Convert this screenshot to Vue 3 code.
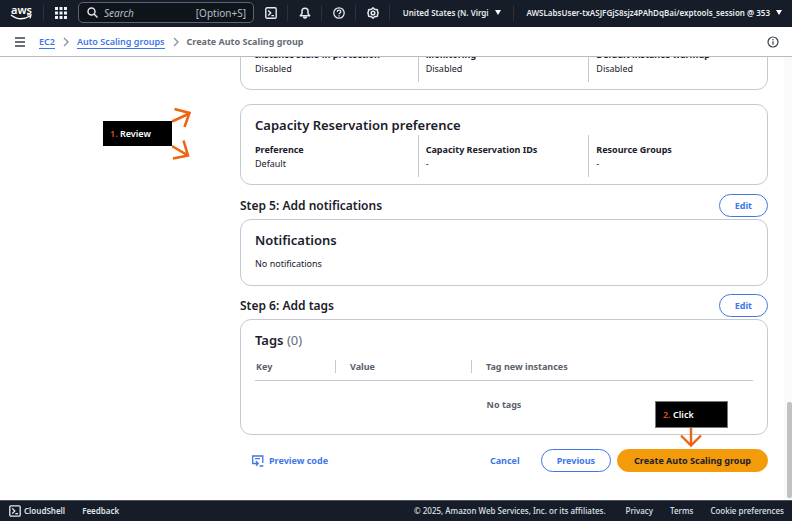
<script setup>
const scaling = [
  { label: 'Instance scale-in protection', value: 'Disabled' },
  { label: 'Monitoring', value: 'Disabled' },
  { label: 'Default instance warmup', value: 'Disabled' },
]
const capacity = [
  { label: 'Preference', value: 'Default' },
  { label: 'Capacity Reservation IDs', value: '-' },
  { label: 'Resource Groups', value: '-' },
]
</script>

<template>
  <div class="page">
    <header class="topbar">
      <a class="logo" href="#" aria-label="AWS home">
        <span class="logo-text">aws</span>
        <svg class="smile" width="22" height="6" viewBox="0 0 22 6" fill="none" stroke="#fff" stroke-width="1.3">
          <path d="M1 1 Q10 8 20 2" />
          <path d="M17 .8 L21 .9 L20 4.4" />
        </svg>
      </a>
      <button class="cell apps" aria-label="Services">
        <svg width="12" height="12" viewBox="0 0 12 12" fill="#f0f2f5">
          <path d="M0 0h3v3H0zM4.5 0h3v3h-3zM9 0h3v3H9zM0 4.5h3v3H0zM4.5 4.5h3v3h-3zM9 4.5h3v3H9zM0 9h3v3H0zM4.5 9h3v3h-3zM9 9h3v3H9z" />
        </svg>
      </button>
      <label class="search">
        <svg width="11" height="11" viewBox="0 0 11 11" fill="none" stroke="#dfe3e8" stroke-width="1.5">
          <circle cx="4.5" cy="4.5" r="3.5" /><path d="M7 7l3.5 3.5" />
        </svg>
        <input type="text" placeholder="Search" aria-label="Search" />
        <span class="hint">[Option+S]</span>
      </label>
      <button class="cell tool" aria-label="CloudShell">
        <svg width="12" height="12" viewBox="0 0 12 12" fill="none" stroke="#e6e9ed" stroke-width="1.4">
          <rect x=".8" y=".8" width="10.4" height="10.4" rx="1.2" /><path d="M3.2 3.4L5.8 6 3.2 8.6M6.4 8.6h2.6" />
        </svg>
      </button>
      <button class="cell tool" aria-label="Notifications">
        <svg width="12" height="12" viewBox="0 0 12 12" fill="none" stroke="#e6e9ed" stroke-width="1.5" stroke-linejoin="round">
          <path d="M1.3 8.7L3 6.6V4.2a3 3 0 0 1 6 0v2.4l1.7 2.1z" /><path d="M4.6 10.2a1.5 1.2 0 0 0 2.8 0z" fill="#e6e9ed" />
        </svg>
      </button>
      <button class="cell tool" aria-label="Help">
        <svg width="12" height="12" viewBox="0 0 12 12" fill="none" stroke="#e6e9ed" stroke-width="1.3">
          <circle cx="6" cy="6" r="5.2" /><path d="M4.2 4.9C4.3 2.6 7.8 2.7 7.8 4.7 7.8 6 6 5.9 6 7.3M6 8.2v1.2" />
        </svg>
      </button>
      <button class="cell tool" aria-label="Settings">
        <svg width="12" height="12" viewBox="0 0 12 12" fill="none" stroke="#e6e9ed" stroke-width="1.5" stroke-linejoin="round">
          <path d="M6 .8l1.5 1.4 2.9.5.2 2L11.2 6l-.6 1.3-.2 2-2.9.5L6 11.2 4.5 9.8l-2.9-.5-.2-2L.8 6l.6-1.3.2-2 2.9-.5z" /><circle cx="6" cy="6" r="1.8" />
        </svg>
      </button>
      <button class="cell region"><span>United States (N. Virgi</span><i class="caret"></i></button>
      <button class="cell account"><span>AWSLabsUser-txASJFGjS8sjz4PAhDqBai/exptools_session @ 353</span><i class="caret"></i></button>
    </header>

    <nav class="crumbs" aria-label="Breadcrumbs">
      <button class="plain menu" aria-label="Open navigation">
        <svg width="10" height="10" viewBox="0 0 10 10" stroke="#39404a" stroke-width="1.3"><path d="M0 1h10M0 5h10M0 9h10" /></svg>
      </button>
      <a href="#">EC2</a>
      <svg class="chev" width="6" height="10" viewBox="0 0 6 10" fill="none" stroke="#8c939d" stroke-width="1.4"><path d="M1 1l4 4-4 4" /></svg>
      <a href="#">Auto Scaling groups</a>
      <svg class="chev" width="6" height="10" viewBox="0 0 6 10" fill="none" stroke="#8c939d" stroke-width="1.4"><path d="M1 1l4 4-4 4" /></svg>
      <span class="current">Create Auto Scaling group</span>
      <button class="plain info" aria-label="Info">
        <svg width="12" height="12" viewBox="0 0 12 12" fill="none" stroke="#39404a" stroke-width="1.2"><circle cx="6" cy="6" r="5" /><path d="M6 5.2v3.6M6 3v1.2" /></svg>
      </button>
    </nav>

    <div class="body">
      <main>
        <section class="card">
          <dl class="cols">
            <div v-for="f in scaling" :key="f.label"><dt>{{ f.label }}</dt><dd>{{ f.value }}</dd></div>
          </dl>
        </section>

        <section class="card capacity">
          <h3>Capacity Reservation preference</h3>
          <dl class="cols">
            <div v-for="f in capacity" :key="f.label"><dt>{{ f.label }}</dt><dd>{{ f.value }}</dd></div>
          </dl>
          <div class="callout review"><b>1.</b> Review</div>
          <svg class="review-arrows" width="20" height="58" viewBox="0 0 20 58" fill="none" stroke="#ee6410" stroke-width="2.6">
            <path d="M0 16.5L17.5 8.5M2.5 4L17.5 8 12.5 22" /><path d="M0 41L16 50.5M11.5 35.5L16 50.5 1 53.5" />
          </svg>
        </section>

        <div class="step"><h2>Step 5: Add notifications</h2><button class="btn">Edit</button></div>
        <section class="card notes">
          <h3>Notifications</h3>
          <p>No notifications</p>
        </section>

        <div class="step"><h2>Step 6: Add tags</h2><button class="btn">Edit</button></div>
        <section class="card tags">
          <h3>Tags <span>(0)</span></h3>
          <table>
            <thead>
              <tr><th class="key">Key</th><th class="val">Value</th><th>Tag new instances</th></tr>
            </thead>
            <tbody><tr><td colspan="3">No tags</td></tr></tbody>
          </table>
        </section>

        <div class="actions">
          <button class="plain link preview">
            <svg width="12" height="12" viewBox="0 0 12 12" fill="none" stroke="#4176e4" stroke-width="1.3">
              <path d="M.7 6V1h10.1v7M3 3.6h5M.7 5v3.5h5M4 6.2L6.3 8.5 4 10.8M7.5 11h3.8" />
            </svg>
            Preview code
          </button>
          <button class="plain link cancel">Cancel</button>
          <button class="btn">Previous</button>
          <div class="create">
            <button class="btn primary">Create Auto Scaling group</button>
            <div class="callout click"><b>2.</b> Click</div>
            <svg class="click-arrow" width="24" height="20" viewBox="0 0 24 20" fill="none" stroke="#ee6410" stroke-width="2.4">
              <path d="M12 0v17M2 7.5L12 17.5 22 7.5" />
            </svg>
          </div>
        </div>
      </main>
      <div class="track"><div class="thumb"></div></div>
    </div>

    <footer>
      <button class="plain shell">
        <svg width="12" height="12" viewBox="0 0 12 12" fill="none" stroke="#e6e9ed" stroke-width="1.3">
          <rect x=".8" y=".8" width="10.4" height="10.4" rx="1.2" /><path d="M3.2 3.4L5.8 6 3.2 8.6M6.4 8.6h2.6" />
        </svg>
        CloudShell
      </button>
      <a href="#">Feedback</a>
      <span class="copy">© 2025, Amazon Web Services, Inc. or its affiliates.</span>
      <a class="legal" href="#">Privacy</a>
      <a class="legal" href="#">Terms</a>
      <a class="legal" href="#">Cookie preferences</a>
    </footer>
  </div>
</template>

<style>
body { margin: 0; background: #fff; }
</style>

<style scoped>
* { box-sizing: border-box; }
.page { height: 100vh; display: flex; flex-direction: column; font: 9px/14px "Noto Sans", "Open Sans", sans-serif; color: #1a202a; }
button { font: inherit; color: inherit; cursor: pointer; white-space: nowrap; }
a { text-decoration: none; color: inherit; white-space: nowrap; }
h2, h3, p, dl, dd { margin: 0; }
svg { flex: none; display: block; }
.plain { border: 0; padding: 0; background: none; display: flex; align-items: center; }

.topbar { height: 27px; flex: none; display: flex; align-items: center; background: #161d28; color: #fff; padding-bottom: 2px; }
.logo { width: 44px; height: 16px; flex: none; padding-left: 10px; border-right: 1px solid #2b323d; display: flex; flex-direction: column; font-size: 11px; line-height: 9px; font-weight: 600; }
.logo-text { padding-left: 1px; }
.cell { height: 16px; flex: none; border: 0; border-right: 1px solid #2b323d; background: none; padding: 0; display: flex; align-items: center; justify-content: center; font-size: 8px; font-weight: 600; color: #e9ecf0; }
.apps { width: 34px; border-right: 0; }
.search { width: 176px; height: 21px; flex: none; border: 1px solid #5d6572; border-radius: 5px; background: #0f141a; display: flex; align-items: center; padding: 0 7px 0 8px; gap: 6px; color: #b6bdc7; }
.search input { flex: 1; min-width: 0; border: 0; padding: 0; outline: 0; background: none; color: #fff; font: italic 10px/14px "Noto Sans", sans-serif; }
.search input::placeholder { color: #b6bdc7; opacity: 1; }
.hint { font-size: 10px; }
.tool { width: 34px; }
.cell.region { flex: 1; gap: 6px; }
.account { border-right: 0; padding: 0 10px 0 12px; gap: 6px; }
.caret { border: 3px solid transparent; border-top: 5px solid #fff; border-bottom: 0; }

.crumbs { height: 30px; flex: none; display: flex; align-items: center; padding: 0 13px 0 15px; border-bottom: 1px solid #b6bac2; font-weight: 700; color: #646b76; }
.crumbs a { color: #4077e8; border-bottom: 1px solid #4077e8; line-height: 13px; font-weight: 600; }
.menu { margin-right: 14px; }
.chev { margin: 0 8px; }
.info { margin-left: auto; }

.body { flex: 1; min-height: 0; display: flex; }
main { flex: 1; min-width: 0; overflow: hidden; display: flex; flex-direction: column; justify-content: flex-end; padding: 0 16px 28px 240px; }
.track { width: 8px; flex: none; background: #fafafa; display: flex; flex-direction: column; align-items: flex-end; justify-content: flex-end; padding-bottom: 2px; }
.thumb { width: 5px; height: 96px; border-radius: 2px; background: #c1c1c1; }

.card { flex: none; border: 1px solid #c6c9d0; border-radius: 11px; padding: 7px 14px; position: relative; }
h3 { font-size: 13px; line-height: 20px; font-weight: 600; }
h3 span { font-weight: 400; color: #656c77; }
h2 { font-size: 12px; line-height: 18px; font-weight: 600; }
.cols { display: grid; grid-template-columns: repeat(3, 1fr); gap: 14px; }
.cols > div { padding: 8px 0 0; height: 42px; }
.cols > div + div { border-left: 1px solid #c6c9d0; margin-left: -8px; padding-left: 7px; }
dt { font-weight: 700; white-space: nowrap; }
.capacity { margin: 14px 0 9px; padding-top: 10px; padding-bottom: 7px; }
.step { flex: none; display: flex; justify-content: space-between; align-items: center; margin-bottom: 2px; }
.notes { height: 67px; padding-top: 10px; margin-bottom: 8px; }
.notes p { padding-top: 7px; }
.tags { height: 116px; padding-top: 10px; }
table { width: 100%; table-layout: fixed; border-collapse: collapse; }
th { text-align: left; font-weight: 700; color: #5a616c; padding: 10px 0 6px 15px; line-height: 14px; border-bottom: 1px solid #c6c9d0; background: linear-gradient(#c6c9d0, #c6c9d0) left 10px / 1px 13px no-repeat; }
th.key { width: 80px; padding-left: 1px; background: none; }
th.val { width: 136px; }
td { text-align: center; font-weight: 700; color: #5a616c; padding-top: 17px; }

.btn { height: 23px; border: 1px solid #4077e8; border-radius: 12px; background: #fff; color: #4077e8; font-weight: 700; padding: 0 15px; line-height: 14px; }
.primary { border-color: #f39b0b; background: #f39b0b; color: #1a202a; padding: 0 16px; }
.actions { flex: none; display: flex; align-items: center; margin-top: 14px; }
.link { color: #4077e8; font-weight: 700; }
.preview { gap: 5px; margin-left: 12px; margin-right: auto; }
.cancel { margin-right: 21px; }
.create { position: relative; margin-left: 6px; }
.callout { position: absolute; background: #000; color: #fff; font-weight: 600; line-height: 25px; padding-left: 7px; white-space: nowrap; }
.callout b { color: #d9541e; font-weight: 600; }
.review { left: -138px; top: 16px; width: 69px; height: 25px; }
.review-arrows { position: absolute; left: -69px; top: 0; }
.click { left: 38px; bottom: 44px; width: 73px; height: 27px; border: 1px solid #777; }
.click-arrow { position: absolute; left: 62px; bottom: 24px; }

footer { height: 21px; flex: none; display: flex; align-items: center; background: #161d28; border-top: 1px solid #4a515c; padding: 0 8px 0 9px; gap: 17px; font-size: 8px; font-weight: 600; color: #dfe3e8; }
.shell { gap: 3px; }
.copy { margin-left: auto; margin-right: 3px; font-weight: 500; }
.legal { font-weight: 500; }
</style>
